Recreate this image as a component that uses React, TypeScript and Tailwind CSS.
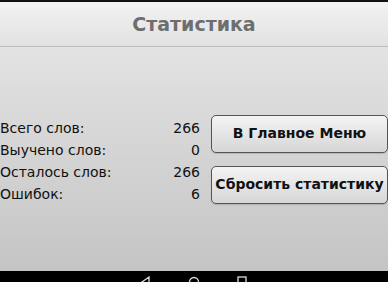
import React from "react";

const STATS = [
  { label: "Всего слов:", value: "266" },
  { label: "Выучено слов:", value: "0" },
  { label: "Осталось слов:", value: "266" },
  { label: "Ошибок:", value: "6" },
];

function MenuButton({ children }: { children: React.ReactNode }) {
  return (
    <button className="flex h-[38px] w-full items-center justify-center whitespace-nowrap rounded-[5px] border border-[#555] bg-gradient-to-b from-[#f4f4f4] to-[#d6d6d6] text-[14px] font-bold text-[#111] shadow-[0_1px_1px_rgba(0,0,0,0.15)]">
      {children}
    </button>
  );
}

export default function App() {
  return (
    <div className="flex h-[282px] w-[388px] flex-col overflow-hidden bg-black font-['DejaVu_Sans',sans-serif]">
      <div className="h-[2px] shrink-0 bg-[#111]" />
      <header className="flex h-[45px] shrink-0 items-center justify-center border-b border-[#bdbdbd] bg-gradient-to-b from-[#f2f2f2] to-[#e2e2e2] shadow-[0_1px_2px_rgba(0,0,0,0.2)]">
        <h1 className="text-[19px] font-bold text-[#6e6e6e]">Статистика</h1>
      </header>

      <main className="flex flex-1 items-center bg-gradient-to-b from-[#e3e3e3] to-[#c4c4c4]">
        <div className="flex w-full items-center gap-[11px]">
          <div className="flex w-[200px] shrink-0 flex-col pt-[4px] text-[14px] leading-[22px] text-[#111]">
            {STATS.map((s) => (
              <div key={s.label} className="flex justify-between">
                <span>{s.label}</span>
                <span>{s.value}</span>
              </div>
            ))}
          </div>
          <div className="flex flex-1 flex-col gap-[13px]">
            <MenuButton>В Главное Меню</MenuButton>
            <MenuButton>Сбросить статистику</MenuButton>
          </div>
        </div>
      </main>

      <nav className="flex h-[11px] shrink-0 items-start justify-center gap-[36px] bg-black pt-[5px]">
        <svg width="12" height="12" viewBox="0 0 12 12" className="text-[#ddd]">
          <path d="M9 1 L2 6 L9 11 Z" fill="none" stroke="currentColor" strokeWidth="1.3" />
        </svg>
        <svg width="12" height="12" viewBox="0 0 12 12" className="text-[#ddd]">
          <circle cx="6" cy="6" r="4.5" fill="none" stroke="currentColor" strokeWidth="1.3" />
        </svg>
        <svg width="12" height="12" viewBox="0 0 12 12" className="text-[#ddd]">
          <rect x="2" y="1" width="8" height="10" fill="none" stroke="currentColor" strokeWidth="1.3" />
        </svg>
      </nav>
    </div>
  );
}
